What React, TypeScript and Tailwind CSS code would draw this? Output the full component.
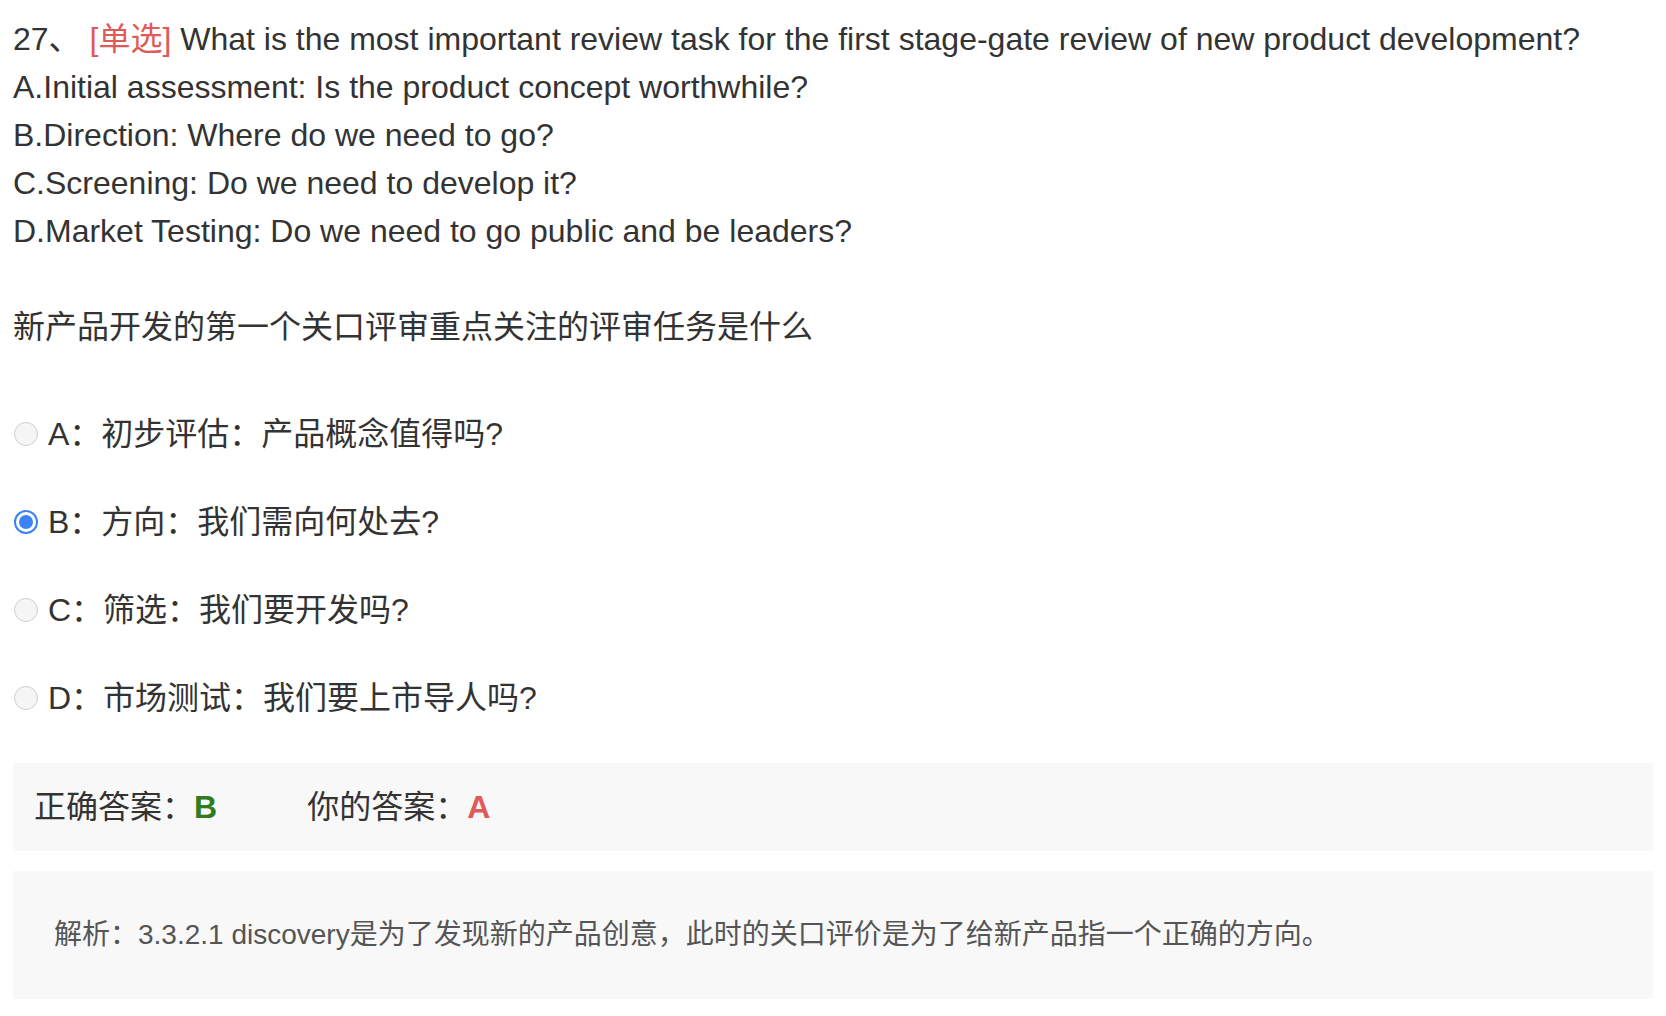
import React from 'react'

const options = [
  { key: 'A', text: 'A：初步评估：产品概念值得吗?' },
  { key: 'B', text: 'B：方向：我们需向何处去?' },
  { key: 'C', text: 'C：筛选：我们要开发吗?' },
  { key: 'D', text: 'D：市场测试：我们要上市导人吗?' },
]

function Radio({ checked }: { checked: boolean }) {
  if (checked) {
    return (
      <span className="ml-[1px] flex h-[24px] w-[24px] shrink-0 items-center justify-center rounded-full border-[2px] border-[#3b82f6] bg-white">
        <span className="h-[14px] w-[14px] rounded-full bg-[#3b82f6]" />
      </span>
    )
  }
  return <span className="ml-[1px] h-[24px] w-[24px] shrink-0 rounded-full border-[1.5px] border-[#d0d0d0] bg-[#f5f5f5]" />
}

export default function App() {
  return (
    <div className="min-h-screen bg-white px-[13px] pt-[15px] font-['Liberation_Sans','Noto_Sans_CJK_SC',sans-serif] text-[32px] leading-[48px] text-[#333]">
      <div>
        27、 <span className="text-[#e05a5a]">[单选]</span> What is the most important review task for the first stage-gate review of new product development?
      </div>
      <div>A.Initial assessment: Is the product concept worthwhile?</div>
      <div>B.Direction: Where do we need to go?</div>
      <div>C.Screening: Do we need to develop it?</div>
      <div>D.Market Testing: Do we need to go public and be leaders?</div>
      <div className="h-[48px]" />
      <div>新产品开发的第一个关口评审重点关注的评审任务是什么</div>

      <div className="mt-[39px] flex flex-col">
        {options.map((o) => (
          <label key={o.key} className="flex h-[88px] items-center gap-[10px]">
            <Radio checked={o.key === 'B'} />
            <span>{o.text}</span>
          </label>
        ))}
      </div>

      <div className="mt-[21px] flex h-[88px] items-center bg-[#f8f8f8] px-[21px]">
        <span>正确答案：</span>
        <span className="font-bold text-[#2f7d1f]">B</span>
        <span className="ml-[90px]">你的答案：</span>
        <span className="font-bold text-[#e05a5a]">A</span>
      </div>

      <div className="mt-[20px] flex h-[128px] items-center bg-[#f8f8f8] pl-[41px] text-[28px] text-[#555]">
        <span>解析：3.3.2.1 discovery是为了发现新的产品创意，此时的关口评价是为了给新产品指一个正确的方向。</span>
      </div>
    </div>
  )
}
